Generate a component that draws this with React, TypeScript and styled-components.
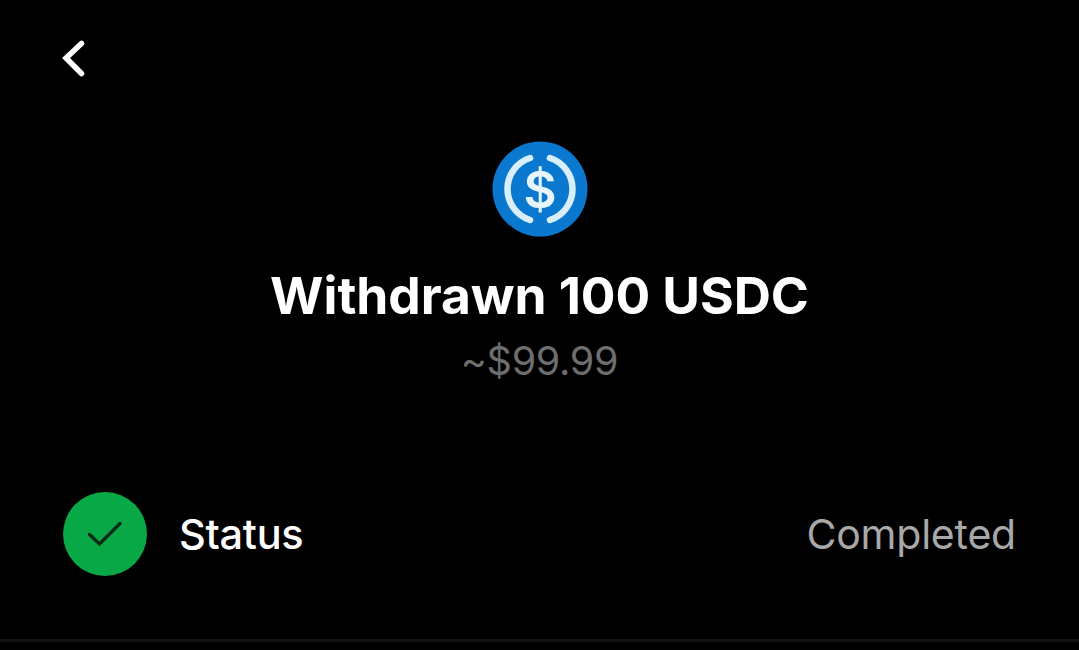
import styled, { createGlobalStyle } from 'styled-components'

const GlobalStyle = createGlobalStyle`
  html, body {
    margin: 0;
    padding: 0;
    background: #000;
  }
`

const Screen = styled.div`
  width: 1079px;
  height: 650px;
  box-sizing: border-box;
  background: #000;
  color: #fff;
  font-family: Inter, "Liberation Sans", sans-serif;
  display: flex;
  flex-direction: column;
  overflow: hidden;
`

const TopBar = styled.div`
  height: 141px;
  padding: 39px 0 0 61px;
  box-sizing: border-box;
  flex: none;
`

const BackButton = styled.button`
  display: block;
  width: 26px;
  height: 38px;
  padding: 0;
  border: 0;
  background: none;
`

const Summary = styled.div`
  display: flex;
  flex-direction: column;
  align-items: center;
  flex: none;
`

const Title = styled.h1`
  margin: 29px 0 0;
  font-size: 51.5px;
  line-height: 58px;
  font-weight: 700;
  letter-spacing: -0.05px;
`

const Subtitle = styled.div`
  margin-top: 14px;
  font-size: 39.5px;
  line-height: 46px;
  color: #6e6e6e;
  letter-spacing: -0.3px;
`

const StatusRow = styled.div`
  margin-top: 108px;
  padding: 0 63px;
  display: flex;
  align-items: center;
  flex: none;
`

const StatusBadge = styled.div`
  width: 84px;
  height: 84px;
  border-radius: 50%;
  background: #08a847;
  display: flex;
  align-items: center;
  justify-content: center;
  flex: none;
`

const Label = styled.div`
  margin-left: 32px;
  font-size: 41.5px;
  font-weight: 500;
  letter-spacing: -0.3px;
`

const Value = styled.div`
  margin-left: auto;
  font-size: 41px;
  color: #a8a8a8;
  letter-spacing: -0.2px;
`

const Divider = styled.div`
  margin-top: 63px;
  height: 3px;
  background: #111;
  flex: none;
`

const UsdcLogo = () => (
  <svg width="96" height="96" viewBox="0 0 96 96" aria-hidden="true">
    <circle cx="48" cy="48" r="47.5" fill="#0b78d0" />
    <g fill="none" stroke="#d9eefb" strokeWidth="6.5" strokeLinecap="round">
      <path d="M38 17A32.6 32.6 0 0 0 38 79" />
      <path d="M58 17A32.6 32.6 0 0 1 58 79" />
    </g>
    <text
      x="48"
      y="66.5"
      textAnchor="middle"
      fontFamily="Inter, 'Liberation Sans', sans-serif"
      fontSize="51"
      fontWeight="600"
      fill="#e6f4fc"
    >
      $
    </text>
  </svg>
)

export default function App() {
  return (
    <Screen>
      <GlobalStyle />
      <TopBar>
        <BackButton aria-label="Back">
          <svg width="26" height="38" viewBox="0 0 26 38" fill="none">
            <path d="M20.5 4.5 5 19l15.5 15.5" stroke="#fff" strokeWidth="5.5" strokeLinecap="round" strokeLinejoin="miter" />
          </svg>
        </BackButton>
      </TopBar>
      <Summary>
        <UsdcLogo />
        <Title>Withdrawn 100 USDC</Title>
        <Subtitle>~$99.99</Subtitle>
      </Summary>
      <StatusRow>
        <StatusBadge>
          <svg width="40" height="32" viewBox="0 0 40 32" fill="none">
            <path d="M4.5 16.5 14.5 26 35 5.5" stroke="#0c2a18" strokeWidth="3.4" strokeLinecap="round" strokeLinejoin="miter" />
          </svg>
        </StatusBadge>
        <Label>Status</Label>
        <Value>Completed</Value>
      </StatusRow>
      <Divider />
    </Screen>
  )
}
